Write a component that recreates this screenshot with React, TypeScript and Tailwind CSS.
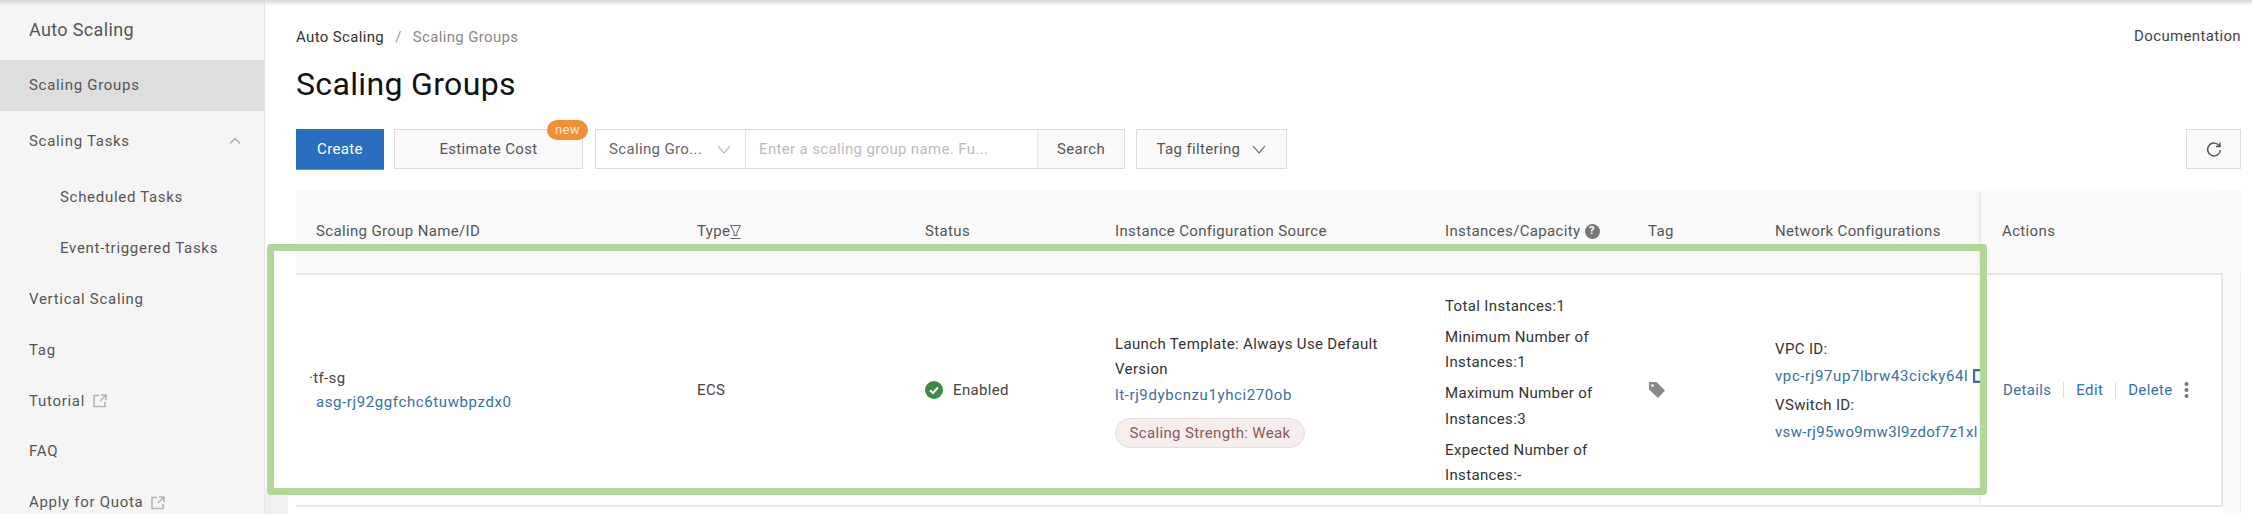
import React from "react";

const Ext = () => (
  <svg width="14" height="14" viewBox="0 0 14 14" fill="none" stroke="#b5b5b5" strokeWidth="1.6" className="ml-2">
    <path d="M6 1.5H1v11h11V8M8 1h5v5M13 1 7 7" />
  </svg>
);

const Side = ({ t, active, sub, ext, chev }: { t: string; active?: boolean; sub?: boolean; ext?: boolean; chev?: boolean }) => (
  <div className={`flex h-[50.9px] items-center text-[15px] tracking-[0.7px] text-[#555] ${sub ? "pl-[60px]" : "pl-[29px]"} ${active ? "bg-[#dedede] text-[#333]" : ""}`}>
    {t}
    {ext && <Ext />}
    {chev && (
      <svg width="12" height="8" viewBox="0 0 12 8" fill="none" stroke="#aaa" strokeWidth="1.5" className="ml-auto mr-[23px]">
        <path d="M1 6.5 6 1.5l5 5" />
      </svg>
    )}
  </div>
);

const Chev = ({ c = "#888" }: { c?: string }) => (
  <svg width="14" height="9" viewBox="0 0 14 9" fill="none" stroke={c} strokeWidth="1.1">
    <path d="M1 1l6 7 6-7" />
  </svg>
);

const Link = ({ children }: { children: React.ReactNode }) => <span className="text-[#3a6ea5]">{children}</span>;
const Id = ({ children }: { children: React.ReactNode }) => <span className="tracking-[0.6px] text-[#3a6ea5]">{children}</span>;

export default function App() {
  return (
    <div className="relative flex h-[514px] w-[2252px] overflow-hidden bg-white font-['Roboto',sans-serif] text-[15px] tracking-[0.35px] text-[#444]">
      <div className="absolute inset-x-0 top-0 z-10 h-[6px] bg-gradient-to-b from-[#d8d8d8] to-transparent" />
      <aside className="w-[265px] shrink-0 border-r border-[#e6e6e6] bg-[#f5f5f5]">
        <div className="flex h-[60px] items-center pb-[2px] pl-[29px] text-[18px] text-[#555]">Auto Scaling</div>
        <Side t="Scaling Groups" active />
        <div className="mt-[5px]" />
        <Side t="Scaling Tasks" chev />
        <div className="mt-[5px]" />
        <Side t="Scheduled Tasks" sub />
        <Side t="Event-triggered Tasks" sub />
        <Side t="Vertical Scaling" />
        <Side t="Tag" />
        <Side t="Tutorial" ext />
        <Side t="FAQ" />
        <Side t="Apply for Quota" ext />
      </aside>

      <main className="min-w-0 flex-1 pl-[31px]">
        <div className="flex h-[74px] justify-between">
          <div className="flex items-center pt-[1px] text-[15px]">
            <span className="text-[#333]">Auto Scaling</span>
            <span className="mx-[11px] text-[#999]">/</span>
            <span className="text-[#888]">Scaling Groups</span>
          </div>
          <span className="mr-[11px] pt-[25px] text-[#444]">Documentation</span>
        </div>
        <h1 className="h-[55px] text-[32px] leading-[20px] text-[#111]">Scaling Groups</h1>

        <div className="flex h-[61px] items-start pr-[11px]">
          <button className="h-[41px] w-[88px] border-b border-[#5b93d6] bg-[#2a6ebf] text-white">Create</button>
          <div className="relative ml-[10px]">
            <button className="h-[40px] w-[189px] border border-[#dcdcdc] bg-[#f9f9f9] text-[#555]">Estimate Cost</button>
            <span className="absolute right-[-5px] top-[-9px] flex h-[20px] w-[41px] items-center justify-center rounded-full bg-[#ef9038] text-[13px] text-[#fde6cf]">new</span>
          </div>
          <div className="ml-[12px] flex h-[40px] w-[530px] border border-[#dcdcdc]">
            <div className="flex w-[150px] items-center justify-between border-r border-[#e4e4e4] pl-[13px] pr-[14px] text-[#666]">
              <span>Scaling Gro...</span>
              <Chev c="#aaa" />
            </div>
            <div className="flex w-[291px] items-center pl-[13px] text-[#bbb]">Enter a scaling group name. Fu...</div>
            <div className="flex flex-1 items-center justify-center border-l border-[#e8e8e8] bg-[#fafafa] text-[#555]">Search</div>
          </div>
          <div className="ml-[11px] flex h-[40px] w-[151px] items-center justify-center gap-[12px] border border-[#dcdcdc] bg-[#fafafa] text-[#555]">
            Tag filtering <Chev c="#555" />
          </div>
          <div className="ml-auto flex h-[40px] w-[55px] items-center justify-center border border-[#dcdcdc] bg-[#fafafa]">
            <svg width="16" height="17" viewBox="0 0 16 17" fill="none" stroke="#555" strokeWidth="1.5">
              <path d="M13.5 5.2A6.4 6.4 0 1 0 14.4 9M14 1.5v4h-4" />
            </svg>
          </div>
        </div>

        <div className="mr-[11px]">
          <div className="grid h-[83px] grid-cols-[401px_228px_190px_330px_203px_127px_206px_241px_18px] items-center bg-[#fafafa] text-[#555]">
            <div className="pl-[20px]">Scaling Group Name/ID</div>
            <div className="flex items-center">Type
              <svg width="11" height="16" viewBox="0 0 11 16" fill="none" stroke="#666" strokeWidth="1">
                <path d="M.5 1.5h10L7 8v3.5H4V8zM.5 14.5h10" />
              </svg>
            </div>
            <div>Status</div>
            <div>Instance Configuration Source</div>
            <div className="flex items-center gap-[4px]">Instances/Capacity
              <span className="flex h-[15px] w-[15px] items-center justify-center rounded-full bg-[#777] text-[11px] font-bold text-white">?</span>
            </div>
            <div>Tag</div>
            <div>Network Configurations</div>
            <div className="flex h-full items-center pl-[21px] shadow-[-3px_0_4px_-2px_rgba(0,0,0,0.12)]">Actions</div>
            <div />
          </div>

          <div className="flex h-[240px]">
            <div className="grid h-[234px] w-[1927px] grid-cols-[401px_228px_190px_330px_203px_127px_206px_240px] items-center border-y-2 border-r-2 border-[#e7e7e7] text-[#444]">
              <div className="pl-[20px] pt-[1px]">
                <div className="-ml-[7px] leading-[24px]">·tf-sg</div>
                <div className="leading-[25px]"><Id>asg-rj92ggfchc6tuwbpzdx0</Id></div>
              </div>
              <div>ECS</div>
              <div className="flex items-center gap-[10px]">
                <svg width="18" height="18" viewBox="0 0 18 18">
                  <circle cx="9" cy="9" r="9" fill="#3d8b47" />
                  <path d="M5 9.2 8 12l5-5.5" fill="none" stroke="#fff" strokeWidth="2" />
                </svg>
                Enabled
              </div>
              <div className="w-[285px] leading-[25.5px]">
                <div className="text-[#333]">Launch Template: Always Use Default Version</div>
                <div><Id>lt-rj9dybcnzu1yhci270ob</Id></div>
                <div className="mt-[10px] flex h-[30px] w-[190px] items-center justify-center rounded-full border border-[#e8dede] bg-[#f6eded] text-[#8a5a5a]">Scaling Strength: Weak</div>
              </div>
              <div className="pr-[10px] pt-[2px] leading-[25.5px] text-[#333]">
                <div>Total Instances:1</div>
                <div className="mt-[5.5px]">Minimum Number of Instances:1</div>
                <div className="mt-[5.5px]">Maximum Number of Instances:3</div>
                <div className="mt-[5.5px]">Expected Number of Instances:-</div>
              </div>
              <div>
                <svg width="18" height="18" viewBox="0 0 18 18" fill="#888">
                  <path d="M1 1h7.5L17 9.5 10 17 1 8.5zM4.5 3.2a1.4 1.4 0 1 0 0 2.8 1.4 1.4 0 0 0 0-2.8z" fillRule="evenodd" />
                </svg>
              </div>
              <div className="overflow-hidden whitespace-nowrap pt-[1px] leading-[27px] text-[#333]">
                <div>VPC ID:</div>
                <div className="flex items-center"><Id>vpc-rj97up7lbrw43cicky64l</Id>
                  <svg width="12" height="14" viewBox="0 0 12 14" fill="none" stroke="#3a6ea5" strokeWidth="2.4" className="ml-[5px] shrink-0"><path d="M1 1h8v12H1z" /></svg>
                </div>
                <div className="mt-[2px]">VSwitch ID:</div>
                <div><Link>vsw-rj95wo9mw3l9zdof7z1xl</Link></div>
              </div>
              <div className="flex h-full items-center pl-[22px] shadow-[-3px_0_4px_-2px_rgba(0,0,0,0.12)]">
                <Link>Details</Link>
                <span className="mx-[12px] h-[16px] w-px bg-[#ddd]" />
                <Link>Edit</Link>
                <span className="mx-[12px] h-[16px] w-px bg-[#ddd]" />
                <Link>Delete</Link>
                <svg width="5" height="18" viewBox="0 0 5 18" fill="#777" className="ml-[11px]">
                  <circle cx="2.5" cy="3" r="2" /><circle cx="2.5" cy="9" r="2" /><circle cx="2.5" cy="15" r="2" />
                </svg>
              </div>
            </div>
            <div className="flex-1 border-r border-[#eeeeee] bg-[#fafafa]" />
          </div>
        </div>
      </main>

      <div className="absolute left-[265px] top-[488px] h-[26px] w-[23px] bg-[#f0f0f0]" />
      <div className="pointer-events-none absolute left-[267px] top-[244px] h-[251px] w-[1720px] rounded-[4px] border-[7px] border-[#b2d59a]" />
    </div>
  );
}
